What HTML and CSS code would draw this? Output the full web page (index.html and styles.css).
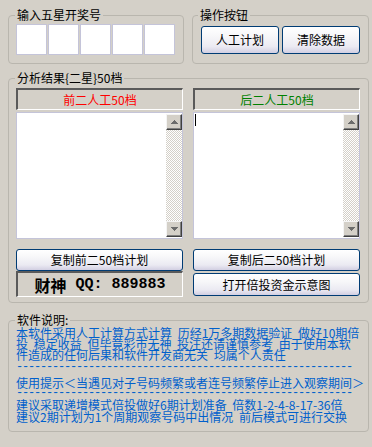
FILE: index.html
```html
<!DOCTYPE html>
<html lang="zh-CN">
<head>
<meta charset="utf-8">
<title>五星二星计划</title>
<link rel="stylesheet" href="styles.css">
</head>
<body>
<div class="app">
  <div class="top-row">
    <fieldset class="group group-input">
      <legend>输入五星开奖号</legend>
      <div class="digits">
        <div class="digit"></div>
        <div class="digit"></div>
        <div class="digit"></div>
        <div class="digit"></div>
        <div class="digit"></div>
      </div>
    </fieldset>
    <fieldset class="group group-ops">
      <legend>操作按钮</legend>
      <div class="ops">
        <button class="btn">人工计划</button>
        <button class="btn">清除数据</button>
      </div>
    </fieldset>
  </div>

  <fieldset class="group group-result">
    <legend>分析结果{二星}50档</legend>
    <div class="result-grid">
      <div class="panel-head red">前二人工50档</div>
      <div class="panel-head green">后二人工50档</div>

      <div class="textbox">
        <div class="text-area"></div>
        <div class="vscroll">
          <div class="sb-btn"><svg width="7" height="4" viewBox="0 0 7 4"><path d="M3 0h1v1h1v1h1v1h1v1H0V3h1V2h1V1h1z" fill="#6c6c6c"/></svg></div>
          <div class="sb-track"></div>
          <div class="sb-btn"><svg width="7" height="4" viewBox="0 0 7 4"><path d="M0 0h7v1H6v1H5v1H4v1H3V3H2V2H1V1H0z" fill="#6c6c6c"/></svg></div>
        </div>
      </div>
      <div class="textbox">
        <div class="text-area"><span class="caret"></span></div>
        <div class="vscroll">
          <div class="sb-btn"><svg width="7" height="4" viewBox="0 0 7 4"><path d="M3 0h1v1h1v1h1v1h1v1H0V3h1V2h1V1h1z" fill="#6c6c6c"/></svg></div>
          <div class="sb-track"></div>
          <div class="sb-btn"><svg width="7" height="4" viewBox="0 0 7 4"><path d="M0 0h7v1H6v1H5v1H4v1H3V3H2V2H1V1H0z" fill="#6c6c6c"/></svg></div>
        </div>
      </div>

      <button class="btn btn-copy">复制前二50档计划</button>
      <button class="btn btn-copy">复制后二50档计划</button>

      <div class="qq">财神<span class="qq-num"> QQ: 889883</span></div>
      <button class="btn btn-plot">打开倍投资金示意图</button>
    </div>
  </fieldset>

  <fieldset class="group group-info">
    <legend>软件说明:</legend>
    <div class="info-block">
      <div class="line">本软件采用人工计算方式计算 历经1万多期数据验证 做好10期倍</div>
      <div class="line">投 稳定收益 但毕竟彩市无神 投注还请谨慎参考 由于使用本软</div>
      <div class="line">件造成的任何后果和软件开发商无关 均属个人责任</div>
    </div>
    <div class="dash dash-1">--------------------------------------------------------</div>
    <div class="line tip">使用提示＜当遇见对子号码频繁或者连号频繁停止进入观察期间＞</div>
    <div class="dash">--------------------------------------------------------</div>
    <div class="info-block advice">
      <div class="line">建议采取递增模式倍投做好6期计划准备 倍数1-2-4-8-17-36倍</div>
      <div class="line">建议2期计划为1个周期观察号码中出情况 前后模式可进行交换</div>
    </div>
  </fieldset>
</div>
</body>
</html>
```

FILE: styles.css
```css
* {
  box-sizing: border-box;
}

html, body {
  margin: 0;
  padding: 0;
}

body {
  width: 372px;
  height: 447px;
  overflow: hidden;
  background: #d4d0c8;
  color: #000;
  font-family: "Noto Sans CJK SC", "Noto Sans", sans-serif;
  font-size: 12px;
}

.app {
  padding: 8px 3px 0 8px;
}

.top-row {
  display: flex;
  gap: 8px;
}

.group {
  margin: 0;
  min-width: 0;
  border: 1px solid #b9b6ae;
  border-radius: 4px;
}

.group legend {
  padding: 0 2px;
  font-size: 12px;
  line-height: 14px;
  color: #000;
}

.group-input {
  width: 176px;
  padding: 2px 7px 8px 7px;
}

.group-input legend,
.group-result legend,
.group-info legend {
  margin-left: -1px;
}

.group-ops {
  width: 177px;
  padding: 4px 8px 8px 8px;
}

.group-ops legend {
  margin-left: -3px;
}

.digits {
  display: flex;
  gap: 1px;
}

.digit {
  width: 31px;
  height: 31px;
  background: #fff;
  border: 1px solid #c4c4d9;
}

.ops {
  display: flex;
  gap: 3px;
}

.ops .btn {
  flex: 1;
  height: 28px;
}

.btn {
  display: flex;
  align-items: center;
  justify-content: center;
  padding: 0;
  font: inherit;
  font-size: 12px;
  line-height: 14px;
  color: #000;
  border: 1px solid #003c74;
  border-radius: 3px;
  background: linear-gradient(to bottom, #ffffff 0%, #f7f7f9 35%, #ebeaf2 75%, #d2cfe2 100%);
}

/* analysis group */
.group-result {
  margin-top: 7px;
  padding: 3px 8px 5px 7px;
}

.result-grid {
  display: grid;
  grid-template-columns: 167px 167px;
  column-gap: 10px;
}

.panel-head {
  height: 22px;
  display: flex;
  align-items: center;
  justify-content: center;
  line-height: 14px;
  border-style: solid;
  border-width: 2px 1px 1px 2px;
  border-color: #5a5a5a #ffffff #ffffff #5a5a5a;
  background: #d4d0c8;
}

.red {
  color: #ff0000;
}

.green {
  color: #008000;
}

.textbox {
  height: 127px;
  margin-top: 2px;
  display: flex;
  background: #fff;
  border: 1px solid #c4c4d9;
}

.text-area {
  flex: 1;
  padding: 1px 0 0 1px;
}

.caret {
  display: block;
  width: 1px;
  height: 12px;
  background: #000;
}

.vscroll {
  width: 16px;
  margin: 1px 0;
  display: flex;
  flex-direction: column;
}

.sb-btn {
  height: 16px;
  flex: none;
  display: flex;
  align-items: center;
  justify-content: center;
  background: #d4d0c8;
  border: 1px solid;
  border-color: #f4f4f4 #404040 #404040 #f4f4f4;
  box-shadow: inset -1px -1px #808080;
}

.sb-btn svg {
  display: block;
}

.sb-track {
  flex: 1;
  background: repeating-conic-gradient(#ffffff 0 25%, #d4d0c8 0 50%) 0 0 / 2px 2px;
}

.btn-copy {
  height: 22px;
  margin-top: 10px;
}

.qq {
  height: 26px;
  display: flex;
  align-items: center;
  justify-content: center;
  white-space: pre;
  font-size: 16px;
  font-weight: bold;
  line-height: 18px;
  border-style: solid;
  border-width: 2px 1px 1px 2px;
  border-color: #5a5a5a #ffffff #ffffff #5a5a5a;
}

.qq-num {
  font-family: "Liberation Mono", monospace;
  font-size: 15px;
}

.btn-plot {
  height: 23px;
  margin: 2px 0 1px;
}

/* description group */
.group-info {
  margin-top: 10px;
  padding: 0 7px 8px 7px;
  color: #0060cc;
}

.line {
  white-space: nowrap;
  line-height: 11px;
  word-spacing: 3px;
}

.dash {
  white-space: nowrap;
  font-family: "Liberation Mono", monospace;
  font-size: 12px;
  letter-spacing: -1.2px;
  line-height: 11px;
}

.dash-1 {
  margin-top: 2px;
}

.tip {
  margin-top: 4px;
}

.advice .line {
  line-height: 12px;
}
```
